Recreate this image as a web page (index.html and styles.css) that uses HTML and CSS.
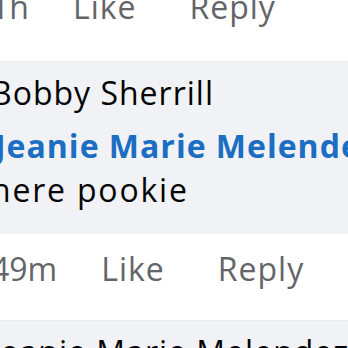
FILE: index.html
```html
<!DOCTYPE html>
<html lang="en">
<head>
    <meta charset="UTF-8">
    <meta name="viewport" content="width=device-width, initial-scale=1.0">
    <title>Comments</title>
    <link rel="stylesheet" href="styles.css">
</head>
<body>
    <div class="thread">
        <div class="actions first">
            <span class="time">1h</span>
            <span>Like</span>
            <span>Reply</span>
        </div>

        <div class="bubble">
            <div class="author">Bobby Sherrill</div>
            <div class="text"><span class="tag">Jeanie Marie Melendez</span><br>here pookie</div>
        </div>

        <div class="actions">
            <span class="time">49m</span>
            <span>Like</span>
            <span>Reply</span>
        </div>

        <div class="bubble">
            <div class="author">Jeanie Marie Melendez</div>
        </div>
    </div>
</body>
</html>
```

FILE: styles.css
```css
body {
    margin: 0;
    padding: 0;
    background-color: #fff;
    font-family: "Open Sans", Lato, sans-serif;
    overflow: hidden;
    height: 348px;
}
.thread {
    margin-left: -9px;
    width: 600px;
}
.actions {
    display: flex;
    gap: 46px;
    font-size: 32px;
    letter-spacing: 1px;
    line-height: 50px;
    color: #636569;
    padding-top: 10px;
    padding-bottom: 26px;
}
.actions.first {
    margin-top: -28px;
    padding-bottom: 29px;
}
.actions span {
    padding-right: 7px;
}
.actions .time {
    letter-spacing: 0;
    margin-right: -9px;
}
.bubble {
    background-color: #f0f2f5;
    border-top: 1px solid #e8eaee;
    padding: 6px 0 22px 0;
    color: #050505;
    font-size: 32px;
    letter-spacing: 1px;
}
.author {
    line-height: 50px;
    font-weight: 500;
    margin-bottom: 6px;
}
.text {
    line-height: 44px;
    letter-spacing: 1.8px;
}
.tag {
    color: #1b6ec2;
    font-weight: 700;
    letter-spacing: 1px;
    margin-left: 4px;
}
```
